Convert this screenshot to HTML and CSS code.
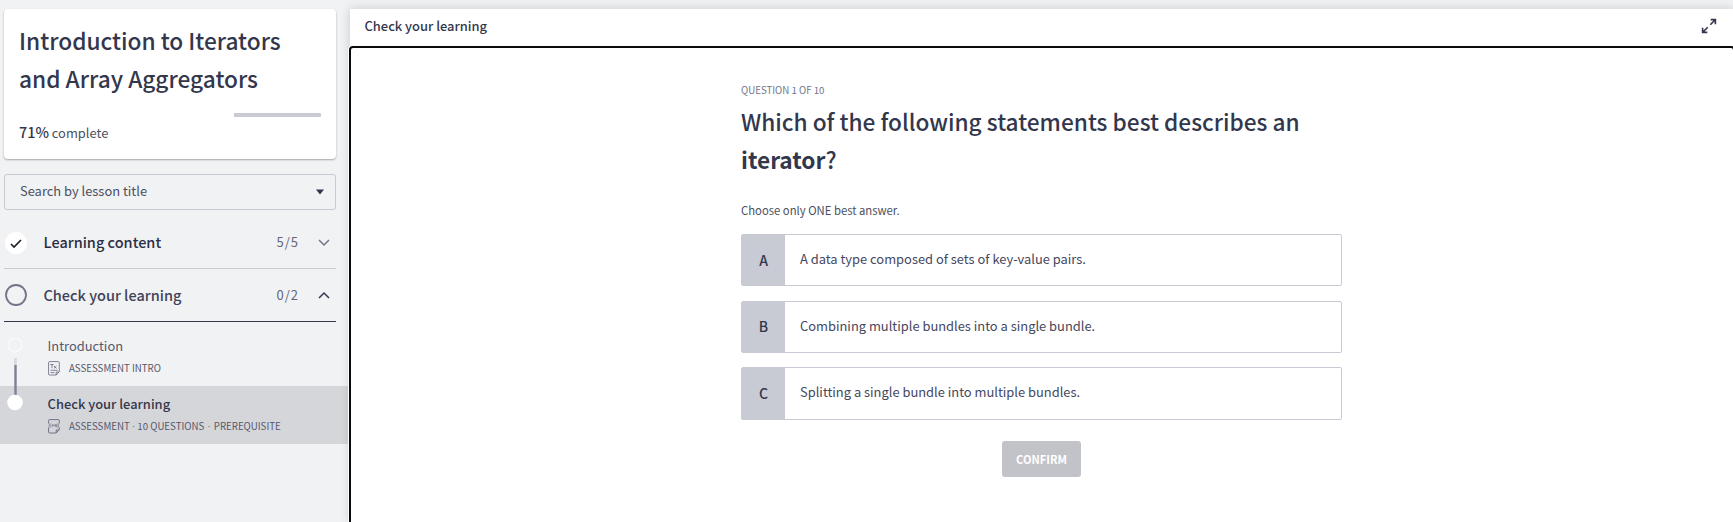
FILE: index.html
```html
<!DOCTYPE html>
<html lang="en">
<head>
<meta charset="utf-8">
<title>Check your learning</title>
<link rel="stylesheet" href="styles.css">
</head>
<body>
<div class="app">
  <aside class="sidebar">
    <section class="course-card">
      <h1 class="course-title">Introduction to Iterators<br>and Array Aggregators</h1>
      <div class="progress"><div class="progress-rest"></div></div>
      <p class="progress-label"><strong>71%</strong> complete</p>
    </section>
    <div class="search">
      <span class="search-text">Search by lesson title</span>
      <svg class="caret" width="8" height="6" viewBox="0 0 8 6"><path d="M0 .5h8L4 5.5z" fill="#33364d"/></svg>
    </div>
    <div class="section">
      <svg class="status" width="24" height="24" viewBox="0 0 24 24"><circle cx="12" cy="12" r="11" fill="#fff"/><path d="M7 13l3 3 7-7" fill="none" stroke="#1d1e2b" stroke-width="1.700"/></svg>
      <span class="section-name dark">Learning content</span>
      <span class="count">5/5</span>
      <svg class="chevron" width="12" height="8" viewBox="0 0 12 8"><path d="M1 1l5 5 5-5" fill="none" stroke="#717489" stroke-width="1.500"/></svg>
    </div>
    <div class="section open">
      <svg class="status" width="24" height="24" viewBox="0 0 24 24"><circle cx="12" cy="12" r="10" fill="none" stroke="#717489" stroke-width="1.800"/></svg>
      <span class="section-name">Check your learning</span>
      <span class="count">0/2</span>
      <svg class="chevron" width="12" height="8" viewBox="0 0 12 8"><path d="M1 7l5-5 5 5" fill="none" stroke="#33364d" stroke-width="1.500"/></svg>
    </div>
    <div class="lessons">
      <div class="lesson">
        <svg class="rail" width="16" height="58" viewBox="0 0 16 58"><circle cx="8" cy="17" r="7" fill="none" stroke="#fbfbfc" stroke-width="1.200"/><path d="M8.500 30v7" stroke="#d5d6dc" stroke-width="2.400"/><path d="M8.500 37v21" stroke="#7d8094" stroke-width="2.400"/></svg>
        <div class="lesson-body">
          <div class="lesson-name">Introduction</div>
          <div class="meta"><svg width="12" height="15" viewBox="0 0 12 15"><path d="M1.500.6h8.800q1 0 1 1v9l-3 3.400H1.500q-.9 0-.9-1V1.600Q.6.6 1.500.6zM8.200 14v-3h3M2.500 9.300h7M2.500 11.600h4M2.300 3.500h3.400M4 3.500v3.800M6 5l2.500 2.400M8.500 5L6 7.400" fill="none" stroke="#717489" stroke-width=".9"/></svg><span>ASSESSMENT INTRO</span></div>
        </div>
      </div>
      <div class="lesson active">
        <svg class="rail" width="16" height="58" viewBox="0 0 16 58"><path d="M8.500 0v9" stroke="#7d8094" stroke-width="2.400"/><circle cx="8" cy="16.500" r="7.800" fill="#fff"/></svg>
        <div class="lesson-body">
          <div class="lesson-name">Check your learning</div>
          <div class="meta"><svg width="12" height="15" viewBox="0 0 12 15"><path d="M.6 4.600V1.600q0-1 .9-1h8.800q1 0 1 1v3M.6 8.400V13q0 1 .9 1h6.700l3.100-3.400V8.400M8.200 14v-3h3" fill="none" stroke="#717489" stroke-width="1"/><path d="M3.600 5H1.200v3h2.400M1.200 6.500h2.100M4.500 8.200V5l1.500 2 1.400-2v3.200M8.600 5h2v3.200h-2zM4.500 6.500h6" fill="none" stroke="#85889a" stroke-width=".7"/></svg><span>ASSESSMENT<i class="dot">·</i>10 QUESTIONS<i class="dot wide">·</i>PREREQUISITE</span></div>
        </div>
      </div>
    </div>
  </aside>
  <main class="player">
    <header class="player-head">
      <span class="player-title">Check your learning</span>
      <svg class="expand" width="16" height="16" viewBox="0 0 16 16"><path d="M9.300 6.700l4.700-4.700M9.700 1.600h4.700v4.700M6.700 9.300L2 14M1.600 9.700v4.700h4.700" fill="none" stroke="#33364d" stroke-width="1.600"/></svg>
    </header>
    <div class="frame">
      <div class="question">
        <div class="q-count">QUESTION 1 OF 10</div>
        <h2 class="q-title">Which of the following statements best describes an<br><b>iterator</b>?</h2>
        <p class="hint">Choose only ONE best answer.</p>
        <div class="options">
          <div class="option"><span class="letter">A</span><span class="answer">A data type composed of sets of key-value pairs.</span></div>
          <div class="option"><span class="letter">B</span><span class="answer">Combining multiple bundles into a single bundle.</span></div>
          <div class="option"><span class="letter">C</span><span class="answer">Splitting a single bundle into multiple bundles.</span></div>
        </div>
        <button class="confirm">CONFIRM</button>
      </div>
    </div>
  </main>
</div>
</body>
</html>
```
FILE: styles.css
```css
* { box-sizing: border-box; }
body {
  margin: 0;
  background: #f1f2f4;
  color: #33374c;
  font-family: "Noto Sans CJK SC", "Noto Sans", sans-serif;
}
h1, h2, p { margin: 0; font-weight: 500; }
svg { display: block; flex: none; }
.app { display: flex; height: 522px; overflow: hidden; }

.sidebar { width: 349px; flex: none; padding-top: 9px; }
.course-card {
  width: 332px;
  height: 150px;
  margin-left: 4px;
  padding: 13px 15px 0;
  border-radius: 4px;
  background: #fff;
  box-shadow: 0 1px 2px rgba(0, 0, 0, .32);
}
.course-title { font-size: 22.700px; line-height: 38px; white-space: nowrap; }
.progress { display: flex; justify-content: flex-end; height: 4px; margin-top: 15px; }
.progress-rest { width: 87px; border-radius: 0 1px 1px 0; background: #c8cad4; }
.progress-label { margin-top: 3px; font-size: 12.900px; line-height: 24px; font-weight: 400; color: #4b4f60; }
.progress-label strong { font-size: 14.400px; font-weight: 500; color: #33374c; }
.search {
  display: flex;
  align-items: center;
  justify-content: space-between;
  width: 332px;
  height: 36px;
  margin: 15px 0 0 4px;
  padding: 0 11px 0 15px;
  border: 1px solid #c8cad4;
  border-radius: 3px;
  font-size: 12.900px;
  line-height: 20px;
  color: #4b4f60;
}
.search-text { margin-top: -2px; }
.section {
  display: flex;
  align-items: center;
  width: 332px;
  height: 53px;
  margin-left: 4px;
  border-bottom: 1px solid #c8cad4;
}
.search + .section { height: 59px; padding-top: 7px; }
.section.open { border-bottom-color: #33374c; }
.section-name { flex: 1; margin-left: 15.500px; font-size: 14.500px; font-weight: 500; line-height: 24px; color: #3f4258; }
.section-name.dark { color: #2c2f42; }
.search + .section .section-name, .search + .section .count { margin-top: -1.500px; }
.count { font-size: 13px; line-height: 20px; letter-spacing: 1px; color: #636679; }
.chevron { margin: 0 6px 0 19px; }
.lessons { padding-top: 6px; }
.lesson { display: flex; height: 58px; padding-left: 7px; }
.lesson.active { background: #d5d6da; }
.lesson-body { margin-left: 24.600px; padding-top: 6px; }
.lesson-name { font-size: 12.900px; line-height: 24px; color: #55586c; }
.active .lesson-name { font-weight: 500; color: #33374c; }
.meta { display: flex; align-items: center; gap: 9.400px; height: 20px; font-size: 9.700px; line-height: 20px; color: #55586c; white-space: nowrap; }
.dot { display: inline-block; width: 7.500px; font-family: "Open Sans", sans-serif; font-style: normal; text-align: center; }
.dot.wide { width: 9.500px; }

.player {
  flex: 1;
  min-width: 0;
  margin: 9px 0 0 1px;
  box-shadow: 0 0 10px rgba(0, 0, 0, .17);
}
.player-head {
  display: flex;
  align-items: center;
  justify-content: space-between;
  height: 37px;
  padding: 0 16px 3px 14.500px;
  background: #fff;
}
.player-title { font-size: 12.900px; line-height: 20px; font-weight: 500; }
.frame {
  position: relative;
  width: 1386px;
  height: 500px;
  margin-left: -1px;
  border: 2px solid #0b0b0d;
  border-radius: 4px;
  background: #fff;
  box-shadow: 0 0 0 1px #fff;
}
.question { width: 601px; margin-left: 390px; padding-top: 32px; display: flex; flex-direction: column; }
.q-count { font-size: 9.700px; line-height: 20px; color: #717489; }
.q-title { margin-top: 3px; font-size: 22.650px; line-height: 38px; white-space: nowrap; }
.hint { margin-top: 21px; font-size: 11.300px; line-height: 20px; font-weight: 400; color: #4b4f60; }
.options { display: flex; flex-direction: column; gap: 14.300px; margin-top: 14px; }
.option { display: flex; height: 52.400px; border: 1px solid #c8cad4; border-radius: 2px; }
.letter { display: flex; align-items: center; justify-content: center; width: 43px; padding-bottom: 1px; background: #c8cad4; font-size: 14px; font-weight: 500; }
.answer { margin-left: 15px; font-size: 12.900px; line-height: 48.500px; color: #454860; }
.confirm {
  align-self: center;
  width: 79px;
  height: 36px;
  margin-top: 21px;
  padding: 0;
  border: 0;
  border-radius: 3px;
  background: #c2c3c9;
  color: #fff;
  font: 700 11.100px "Noto Sans CJK SC", sans-serif;
}
```
